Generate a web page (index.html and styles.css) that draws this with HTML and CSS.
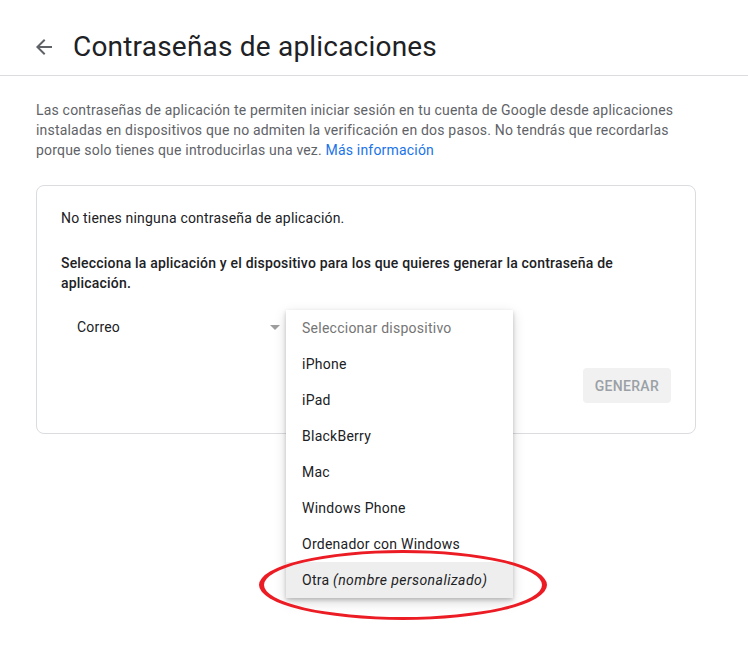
FILE: index.html
```html
<!DOCTYPE html>
<html lang="es">
<head>
    <meta charset="UTF-8">
    <meta name="viewport" content="width=device-width, initial-scale=1.0">
    <title>Contraseñas de aplicaciones</title>
    <link rel="stylesheet" href="styles.css">
</head>
<body>
    <header class="page-header">
        <a class="back-link" href="#" aria-label="Atrás">
            <svg width="24" height="24" viewBox="0 0 24 24"><path d="M20 11H7.83l5.59-5.59L12 4l-8 8 8 8 1.41-1.41L7.83 13H20v-2z" fill="#5f6368"/></svg>
        </a>
        <h1>Contraseñas de aplicaciones</h1>
    </header>

    <main class="content">
        <p class="intro">Las contraseñas de aplicación te permiten iniciar sesión en tu cuenta de Google desde aplicaciones instaladas en dispositivos que no admiten la verificación en dos pasos. No tendrás que recordarlas porque solo tienes que introducirlas una vez. <a href="#">Más información</a></p>

        <section class="card">
            <p class="empty">No tienes ninguna contraseña de aplicación.</p>
            <p class="instructions">Selecciona la aplicación y el dispositivo para los que quieres generar la contraseña de aplicación.</p>

            <div class="selects">
                <div class="select">
                    <span class="select-value">Correo</span>
                    <span class="select-arrow"></span>
                </div>
                <div class="select open">
                    <span class="select-value placeholder">Seleccionar dispositivo</span>
                    <span class="select-arrow"></span>
                    <ul class="menu">
                        <li class="placeholder">Seleccionar dispositivo</li>
                        <li>iPhone</li>
                        <li>iPad</li>
                        <li>BlackBerry</li>
                        <li>Mac</li>
                        <li>Windows Phone</li>
                        <li>Ordenador con Windows</li>
                        <li class="active">Otra <em>(nombre personalizado)</em></li>
                    </ul>
                </div>
            </div>

            <div class="actions">
                <button class="btn-generate" disabled>Generar</button>
            </div>
        </section>
    </main>

    <!-- red marker drawn round the last option -->
    <svg class="highlight" width="300" height="80" viewBox="0 0 300 80">
        <path fill="#ec1c24" fill-rule="evenodd" d="M6 38a144 35 0 1 0 288 0a144 35 0 1 0 -288 0z M11 38a139 32 0 1 0 278 0a139 32 0 1 0 -278 0z"/>
    </svg>
</body>
</html>
```

FILE: styles.css
```css
body {
    font-family: Roboto, "Noto Sans", Arial, sans-serif;
    color: #202124;
    background: #fff;
    margin: 0;
    min-height: 100vh;
    position: relative;
}
.page-header {
    display: flex;
    align-items: center;
    height: 76px;
    padding-left: 32px;
    border-bottom: 1px solid #dadce0;
    box-sizing: border-box;
    padding-top: 18px;
}
.back-link {
    display: flex;
    width: 24px;
    height: 24px;
    margin-right: 17px;
}
.page-header h1 {
    margin: 0;
    font-size: 28px;
    font-weight: 400;
    letter-spacing: 0.2px;
    color: #202124;
}
.content {
    padding: 24px 52px 0 36px;
}
.intro {
    margin: 0;
    font-size: 14px;
    line-height: 20px;
    letter-spacing: 0.19px;
    color: #5f6368;
}
.intro a {
    color: #1a73e8;
    text-decoration: none;
}
.card {
    margin-top: 25px;
    border: 1px solid #dadce0;
    border-radius: 8px;
    padding: 22px 24px 30px 24px;
    letter-spacing: 0.19px;
}
.card p {
    margin: 0;
    font-size: 14px;
    line-height: 20px;
}
.empty {
    margin-bottom: 25px !important;
}
.instructions {
    font-weight: 500;
}
.selects {
    display: flex;
    margin-top: 10px;
}
.select {
    position: relative;
    display: flex;
    align-items: center;
    width: 225px;
    height: 48px;
    padding: 0 6px 0 16px;
    box-sizing: border-box;
    font-size: 14px;
}
.select-value {
    flex: 1;
}
.select-value.placeholder {
    color: #757575;
}
.select-arrow {
    width: 0;
    height: 0;
    border-left: 5px solid transparent;
    border-right: 5px solid transparent;
    border-top: 5px solid #9e9e9e;
}
.menu {
    position: absolute;
    top: 7px;
    left: 0;
    width: 227px;
    margin: 0;
    padding: 0;
    list-style: none;
    background: #fff;
    box-shadow: 0 2px 4px rgba(0, 0, 0, 0.2), 0 4px 12px rgba(0, 0, 0, 0.15);
    z-index: 2;
}
.menu li {
    height: 36px;
    line-height: 36px;
    padding: 0 16px;
    font-size: 14px;
    letter-spacing: 0.25px;
    color: #202124;
    white-space: nowrap;
}
.menu li.placeholder {
    color: #757575;
}
.menu li.active {
    background: #eeeeee;
}
.menu li em {
    letter-spacing: 0.45px;
}
.actions {
    display: flex;
    justify-content: flex-end;
    margin-top: 17px;
}
.btn-generate {
    font-family: inherit;
    font-size: 14px;
    font-weight: 500;
    letter-spacing: 0.3px;
    text-transform: uppercase;
    color: #9aa0a6;
    background: #f1f1f1;
    border: none;
    border-radius: 4px;
    height: 35px;
    padding: 0 12px;
}
.highlight {
    position: absolute;
    left: 253px;
    top: 547px;
    z-index: 3;
}
```
